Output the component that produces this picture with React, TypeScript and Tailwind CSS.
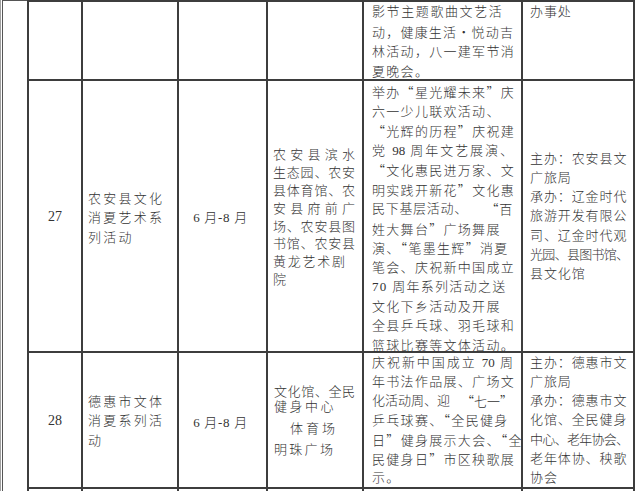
import React from 'react'

const B = 'border-r-2 border-b-2 border-[#3d3d3d]'
const FW = "font-['Noto_Sans_CJK_SC'] [font-feature-settings:'fwid']"

// quotes and middle dot need the full-width CJK forms
function T({ s }: { s: string }) {
  return (
    <>
      {s.split(/([“”·])/).map((p, i) =>
        /^[“”·]$/.test(p) ? (
          <span key={i} className={FW}>
            {p}
          </span>
        ) : (
          <React.Fragment key={i}>{p}</React.Fragment>
        ),
      )}
    </>
  )
}

type Line = { t: string; j?: boolean; r?: string; tr?: string; c?: string }

function Lines({ lines, lh, tr }: { lines: Line[]; lh: string; tr: string }) {
  return (
    <>
      {lines.map((l, i) => {
        if (l.r)
          return (
            <div key={i} className={`flex justify-between whitespace-nowrap overflow-visible ${lh} ${l.tr ?? tr} ${l.c ?? ''}`}>
              <span>
                <T s={l.t} />
              </span>
              <span>
                <T s={l.r} />
              </span>
            </div>
          )
        if (l.j)
          return (
            <div key={i} className={`text-justify [text-align-last:justify] tracking-normal overflow-visible ${lh} ${l.c ?? ''}`}>
              <T s={l.t} />
            </div>
          )
        return (
          <div key={i} className={`whitespace-nowrap overflow-visible ${lh} ${l.tr ?? tr} ${l.c ?? ''}`}>
            <T s={l.t} />
          </div>
        )
      })}
    </>
  )
}

const r0c5: Line[] = [
  { t: '影节主题歌曲文艺活', tr: 'tracking-[1.6px]' },
  { t: '动，健康生活·悦动吉', j: true },
  { t: '林活动，八一建军节消' },
  { t: '夏晚会。' },
]

const r1c4: Line[] = [
  { t: '农安县滨水', tr: 'tracking-[4.25px]' },
  { t: '生态园、农安' },
  { t: '县体育馆、农' },
  { t: '安县府前广', tr: 'tracking-[4.25px]' },
  { t: '场、农安县图' },
  { t: '书馆、农安县' },
  { t: '黄龙艺术剧', tr: 'tracking-[1.75px]' },
  { t: '院' },
]

const r1c5: Line[] = [
  { t: '举办“星光耀未来”庆' },
  { t: '六一少儿联欢活动、' },
  { t: '“光辉的历程”庆祝建' },
  { t: '党 98 周年文艺展演、', j: true },
  { t: '“文化惠民进万家、文' },
  { t: '明实践开新花”文化惠' },
  { t: '民下基层活动、', r: '“百', tr: 'tracking-[0.7px]' },
  { t: '姓大舞台”广场舞展' },
  { t: '演、“笔墨生辉”消夏' },
  { t: '笔会、庆祝新中国成立' },
  { t: '70 周年系列活动之送' },
  { t: '文化下乡活动及开展' },
  { t: '全县乒乓球、羽毛球和' },
  { t: '篮球比赛等文体活动。' },
]

const r1c6: Line[] = [
  { t: '主办：农安县文' },
  { t: '广旅局' },
  { t: '承办：辽金时代' },
  { t: '旅游开发有限公' },
  { t: '司、辽金时代观' },
  { t: '光园、县图书馆、', tr: 'tracking-[-0.7px]' },
  { t: '县文化馆' },
]

const r2c5: Line[] = [
  { t: '庆祝新中国成立 70 周', j: true },
  { t: '年书法作品展、广场文' },
  { t: '化活动周、迎', r: '“七一”', tr: 'tracking-[0px]' },
  { t: '乒乓球赛、“全民健身' },
  { t: '日”健身展示大会、“全' },
  { t: '民健身日”市区秧歌展' },
  { t: '示。' },
]

const r2c6: Line[] = [
  { t: '主办：德惠市文' },
  { t: '广旅局' },
  { t: '承办：德惠市文' },
  { t: '化馆、全民健身' },
  { t: '中心、老年协会、', tr: 'tracking-[-0.7px]' },
  { t: '老年体协、秧歌' },
  { t: '协会' },
]

export default function App() {
  return (
    <div className="w-[640px] h-[491px] overflow-hidden bg-white flex text-[13px] text-[#333] font-light font-['Liberation_Serif','Noto_Sans_CJK_SC',serif]">
      {/* page edge + blank region column */}
      <div className="w-px shrink-0 bg-[#a0a0a0]" />
      <div className="w-px shrink-0" />
      <div className="w-[25px] shrink-0 border-l border-t border-[#555]" />

      <div className="shrink-0 h-fit grid grid-cols-[54px_96px_89px_96px_159px_112px] grid-rows-[79px_272px_136px_40px] border-l-2 border-t-2 border-[#3d3d3d]">
        {/* row carried over from previous page */}
        <div className={B} />
        <div className={B} />
        <div className={B} />
        <div className={B} />
        <div className={`${B} pl-[8px]`}>
          <div className="w-[141px]">
            <Lines lines={r0c5} lh="h-[20px] leading-[20px]" tr="tracking-[1.3px]" />
          </div>
        </div>
        <div className={`${B} pl-[7px]`}>
          <div className="h-[20px] leading-[20px] tracking-[0.9px]">办事处</div>
        </div>

        {/* 27 */}
        <div className={`${B} flex items-center justify-center text-[14px]`}>27</div>
        <div className={`${B} flex flex-col justify-center pl-[5px] pt-[4px]`}>
          <Lines
            lines={[{ t: '农安县文化' }, { t: '消夏艺术系' }, { t: '列活动' }]}
            lh="h-[19.5px] leading-[19.5px]"
            tr="tracking-[2.25px]"
          />
        </div>
        <div className={`${B} flex items-center justify-center pt-[4px] pr-[4px] tracking-[0.7px]`}>6 月-8 月</div>
        <div className={`${B} flex flex-col justify-center pl-[5px] pt-[3px]`}>
          <Lines lines={r1c4} lh="h-[17.8px] leading-[17.8px]" tr="tracking-[0.8px]" />
        </div>
        <div className={`${B} pl-[8px] pt-[1px]`}>
          <div className="w-[141px]">
            <Lines lines={r1c5} lh="h-[19.5px] leading-[19.5px]" tr="tracking-[1.3px]" />
          </div>
        </div>
        <div className={`${B} flex flex-col justify-center pl-[7px]`}>
          <Lines lines={r1c6} lh="h-[19.2px] leading-[19.2px]" tr="tracking-[0.9px]" />
        </div>

        {/* 28 */}
        <div className={`${B} flex items-center justify-center text-[14px]`}>28</div>
        <div className={`${B} flex flex-col justify-center pl-[5px] pt-[2px]`}>
          <Lines
            lines={[{ t: '德惠市文体' }, { t: '消夏系列活' }, { t: '动' }]}
            lh="h-[19.5px] leading-[19.5px]"
            tr="tracking-[2.25px]"
          />
        </div>
        <div className={`${B} flex items-center justify-center pt-[6px] pr-[4px] tracking-[0.7px]`}>6 月-8 月</div>
        <div className={`${B} flex flex-col justify-center pl-[6px]`}>
          <Lines
            lines={[
              { t: '文化馆、全民', tr: 'tracking-[0.6px]' },
              { t: '健身中心', tr: 'tracking-[2.5px]' },
              { t: '体育场', tr: 'tracking-[3px]', c: 'pl-[16px] mt-[7px]' },
              { t: '明珠广场', tr: 'tracking-[2.3px]', c: 'mt-[6px]' },
            ]}
            lh="h-[15px] leading-[15px]"
            tr="tracking-[1px]"
          />
        </div>
        <div className={`${B} flex flex-col justify-center pl-[8px]`}>
          <div className="w-[141px]">
            <Lines lines={r2c5} lh="h-[19.2px] leading-[19.2px]" tr="tracking-[1.3px]" />
          </div>
        </div>
        <div className={`${B} flex flex-col justify-center pl-[7px]`}>
          <Lines lines={r2c6} lh="h-[19.2px] leading-[19.2px]" tr="tracking-[0.9px]" />
        </div>

        {/* next row, cut off */}
        <div className="border-r-2 border-[#3d3d3d]" />
        <div className="border-r-2 border-[#3d3d3d]" />
        <div className="border-r-2 border-[#3d3d3d]" />
        <div className="border-r-2 border-[#3d3d3d]" />
        <div className="border-r-2 border-[#3d3d3d]" />
        <div className="border-r-2 border-[#3d3d3d]" />
      </div>
    </div>
  )
}
